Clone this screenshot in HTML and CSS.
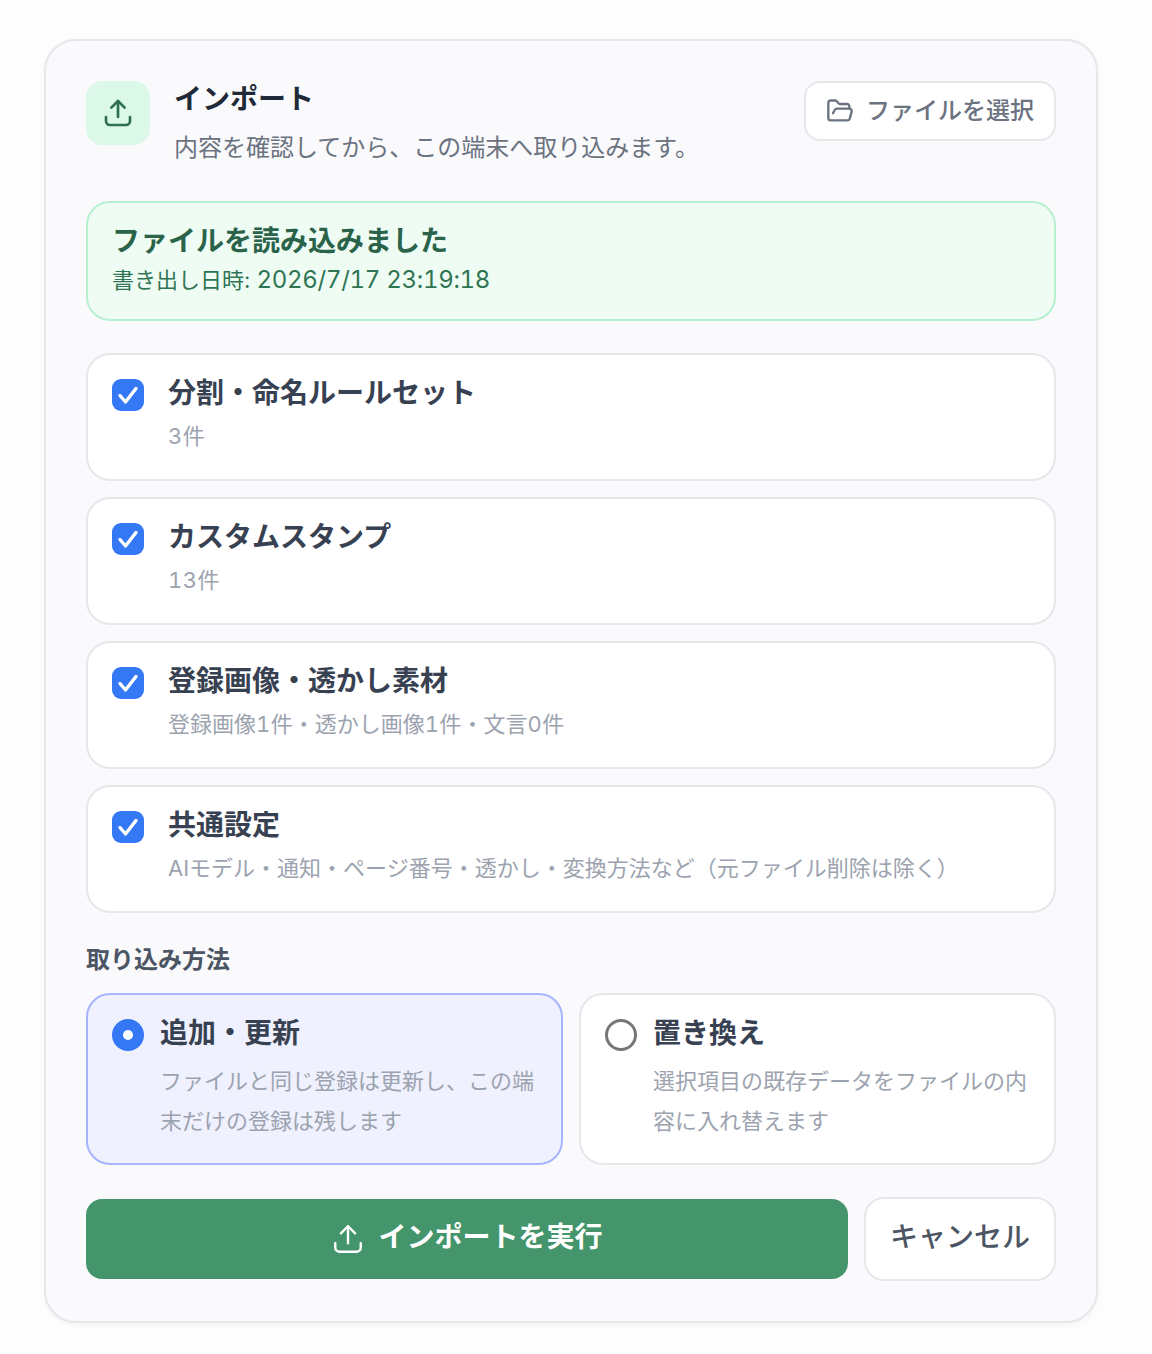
FILE: index.html
```html
<!DOCTYPE html>
<html lang="ja">
<head>
  <meta charset="UTF-8" />
  <meta name="viewport" content="width=device-width, initial-scale=1.0" />
  <title>インポート</title>
  <link rel="stylesheet" href="styles.css">
</head>
<body>
  <div class="card">
    <div class="header">
      <div class="header-icon">
        <svg width="32" height="32" viewBox="0 0 24 24" fill="none" stroke="#2f6f52" stroke-width="2" stroke-linecap="round" stroke-linejoin="round"><path d="M21 15v3a3 3 0 0 1-3 3H6a3 3 0 0 1-3-3v-3"/><path d="M17 8l-5-5-5 5"/><path d="M12 3v12"/></svg>
      </div>
      <div class="header-text">
        <h1>インポート</h1>
        <p>内容を確認してから、この端末へ取り込みます。</p>
      </div>
      <button class="btn-file">
        <svg width="28" height="28" viewBox="0 0 24 24" fill="none" stroke="#6b7280" stroke-width="2" stroke-linecap="round" stroke-linejoin="round"><path d="M6 14l1.5-2.9A2 2 0 0 1 9.24 10H20a2 2 0 0 1 1.94 2.5l-1.54 6a2 2 0 0 1-1.95 1.5H4a2 2 0 0 1-2-2V5a2 2 0 0 1 2-2h3.9a2 2 0 0 1 1.69.9l.81 1.2a2 2 0 0 0 1.67.9H18a2 2 0 0 1 2 2v2"/></svg>
        <span class="btn-label">ファイルを選択</span>
      </button>
    </div>

    <div class="notice">
      <strong>ファイルを読み込みました</strong>
      <span>書き出し日時: <i class="num date">2026/7/17 23:19:18</i></span>
    </div>

    <div class="items">
      <label class="item">
        <span class="check"><svg width="24" height="24" viewBox="0 0 24 24" fill="none" stroke="#fff" stroke-width="3.4" stroke-linecap="round" stroke-linejoin="round"><path d="M4 12.5l5.5 6.5L20 5.5"/></svg></span>
        <span class="item-text"><b>分割・命名ルールセット</b><small><i class="num">3</i>件</small></span>
      </label>
      <label class="item">
        <span class="check"><svg width="24" height="24" viewBox="0 0 24 24" fill="none" stroke="#fff" stroke-width="3.4" stroke-linecap="round" stroke-linejoin="round"><path d="M4 12.5l5.5 6.5L20 5.5"/></svg></span>
        <span class="item-text"><b>カスタムスタンプ</b><small><i class="num">13</i>件</small></span>
      </label>
      <label class="item">
        <span class="check"><svg width="24" height="24" viewBox="0 0 24 24" fill="none" stroke="#fff" stroke-width="3.4" stroke-linecap="round" stroke-linejoin="round"><path d="M4 12.5l5.5 6.5L20 5.5"/></svg></span>
        <span class="item-text"><b>登録画像・透かし素材</b><small>登録画像<i class="num">1</i>件・透かし画像<i class="num">1</i>件・文言<i class="num">0</i>件</small></span>
      </label>
      <label class="item">
        <span class="check"><svg width="24" height="24" viewBox="0 0 24 24" fill="none" stroke="#fff" stroke-width="3.4" stroke-linecap="round" stroke-linejoin="round"><path d="M4 12.5l5.5 6.5L20 5.5"/></svg></span>
        <span class="item-text"><b>共通設定</b><small>AIモデル・通知・ページ番号・透かし・変換方法など（元ファイル削除は除く）</small></span>
      </label>
    </div>

    <div class="method-label">取り込み方法</div>
    <div class="methods">
      <label class="method selected">
        <span class="radio on"></span>
        <span class="method-text"><b>追加・更新</b><small>ファイルと同じ登録は更新し、この端末だけの登録は残します</small></span>
      </label>
      <label class="method">
        <span class="radio"></span>
        <span class="method-text"><b>置き換え</b><small>選択項目の既存データをファイルの内容に入れ替えます</small></span>
      </label>
    </div>

    <div class="actions">
      <button class="btn-run">
        <svg width="34" height="34" viewBox="0 0 24 24" fill="none" stroke="#fff" stroke-width="1.7" stroke-linecap="round" stroke-linejoin="round"><path d="M21 15v3a3 3 0 0 1-3 3H6a3 3 0 0 1-3-3v-3"/><path d="M17 8l-5-5-5 5"/><path d="M12 3v12"/></svg>
        <span class="btn-label">インポートを実行</span>
      </button>
      <button class="btn-cancel"><span class="btn-label">キャンセル</span></button>
    </div>
  </div>
</body>
</html>
```

FILE: styles.css
```css
* { box-sizing: border-box; }
body {
  margin: 0; padding: 39px 54px 30px 44px;
  font-family: Inter, "Noto Sans CJK JP", sans-serif;
  background: #fdfdfe; color: #1f2937;
}
button { font-family: inherit; cursor: pointer; }
.num { font-style: normal; font-variant-numeric: tabular-nums; letter-spacing: 0.5px; }
.num.date { font-size: 24px; line-height: 1; letter-spacing: -0.3px; }
.card {
  padding: 40px; background: #fafafc; border: 2px solid #e5e7eb;
  border-radius: 32px; box-shadow: 0 2px 6px rgba(0, 0, 0, 0.04);
}
.header { display: flex; align-items: flex-start; gap: 24px; margin-bottom: 35px; }
.header-icon {
  width: 64px; height: 64px; flex: none; display: flex;
  align-items: center; justify-content: center;
  background: #dcf8e8; border-radius: 16px;
}
.header-text { flex: 1; }
h1 { margin: 0; font-size: 28px; line-height: 36px; font-weight: 700; color: #1f2937; }
.header-text p { margin: 13px 0 0; font-size: 24px; line-height: 36px; color: #6b7280; }
.btn-label { display: block; padding-bottom: 5px; }
.btn-file {
  height: 60px; width: 252px; display: flex; align-items: center; justify-content: center; gap: 12px;
  background: #fff; border: 2px solid #e5e7eb; border-radius: 16px;
  font-size: 24px; font-weight: 500; color: #6b7280;
}
.notice {
  display: flex; flex-direction: column; height: 120px; padding: 18px 24px 0;
  margin-bottom: 32px;
  background: #effcf4; border: 2px solid #b7f0cf; border-radius: 24px;
}
.notice strong { font-size: 28px; line-height: 40px; margin-bottom: 1px; color: #2a6349; }
.notice span { font-size: 22px; line-height: 36px; color: #2f7554; }
.items { display: flex; flex-direction: column; gap: 16px; }
.item {
  display: flex; gap: 24px; height: 128px; padding: 19px 24px;
  background: #fff; border: 2px solid #e5e7eb; border-radius: 24px;
}
.check {
  width: 32px; height: 32px; margin-top: 5px; flex: none; display: flex;
  align-items: center; justify-content: center;
  background: #3478f6; border-radius: 9px;
}
b { display: block; font-size: 28px; line-height: 38px; font-weight: 700; color: #374151; }
small { display: block; font-size: 22px; line-height: 40px; color: #9ca3af; }
.item-text small { margin-top: 4px; }
.method-label { margin: 31px 0 17px; font-size: 24px; line-height: 32px; font-weight: 700; color: #4b5563; }
.methods { display: grid; grid-template-columns: 1fr 1fr; gap: 16px; }
.method {
  display: flex; gap: 16px; height: 172px; padding: 19px 24px;
  background: #fff; border: 2px solid #e5e7eb; border-radius: 24px;
}
.method.selected { background: #eff1fe; border-color: #a5b4fc; }
.radio {
  width: 32px; height: 32px; margin-top: 5px; flex: none;
  background: #fff; border: 3px solid #767676; border-radius: 50%;
}
.radio.on { background: #3478f6; border: 11px solid #3478f6; position: relative; }
.radio.on::after {
  content: ""; position: absolute; inset: 0; background: #fff; border-radius: 50%;
}
.method-text small { margin-top: 9px; }
.actions { display: flex; align-items: center; gap: 16px; margin-top: 32px; }
.btn-run {
  flex: 1; height: 80px; display: flex; align-items: center; justify-content: center; gap: 13px;
  background: #44956c; border: none; border-radius: 16px;
  font-size: 28px; font-weight: 700; color: #fff;
}
.btn-run .btn-label, .btn-cancel .btn-label { padding-bottom: 9px; }
.btn-cancel {
  width: 192px; height: 84px; background: #fff; border: 2px solid #e5e7eb; border-radius: 20px;
  font-size: 28px; font-weight: 500; color: #4b5563;
}
```
